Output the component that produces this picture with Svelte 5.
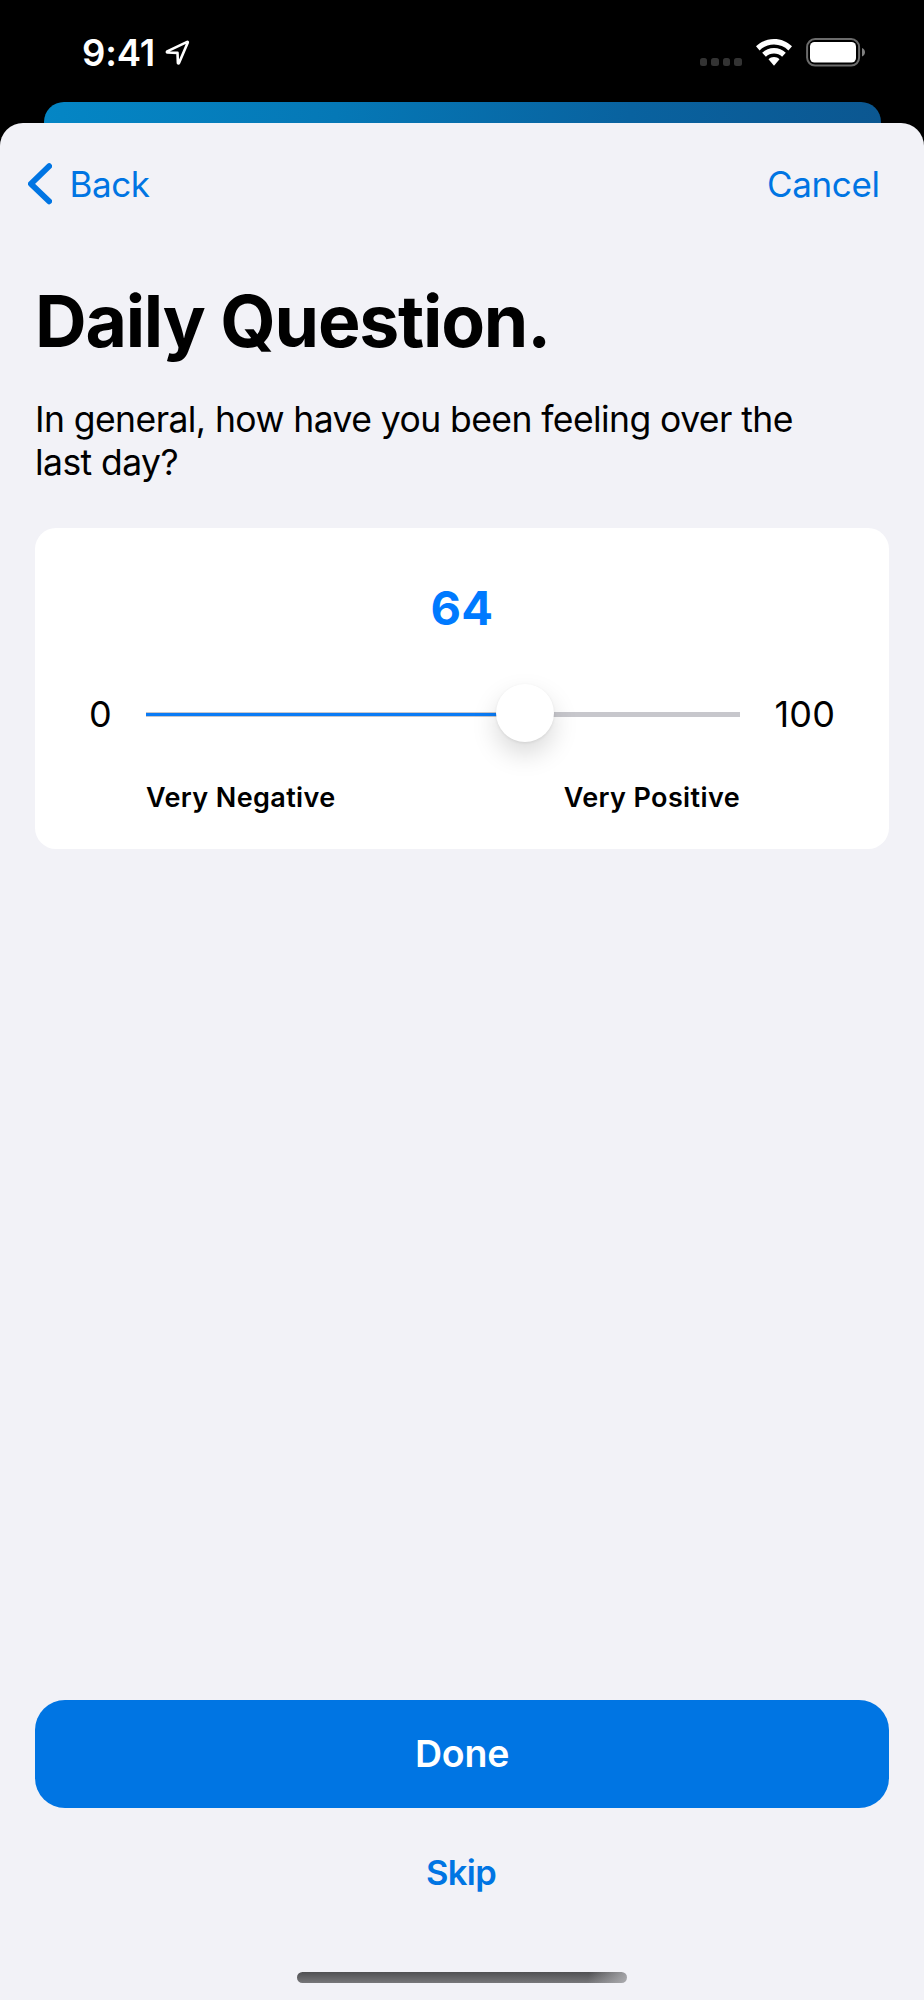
<script>
  let value = 64;
  const min = 0;
  const max = 100;

  const trackWidth = 594;
  const thumbSize = 58;

  $: thumbLeft = ((value - min) / (max - min)) * (trackWidth - thumbSize) + 7;
</script>

<div class="screen">
  <header class="status-bar">
    <div class="clock">
      <span class="time">9:41</span>
      <svg class="location" viewBox="0 0 26 26">
        <path d="M22.8 2.4Q23 1.6 22.2 1.9L2.2 11.4Q1.4 12.2 2.4 12.5L12.5 12.9L12.9 23Q13.5 24 14 23Z" />
      </svg>
    </div>
    <div class="indicators">
      <div class="signal"><i></i><i></i><i></i><i></i></div>
      <svg class="wifi" viewBox="0 0 36 27">
        <path d="M18 0C11 0 4.8 2.7 0 7.3L3.6 11.4C7.4 7.6 12.5 5.5 18 5.5S28.6 7.6 32.4 11.4L36 7.3C31.2 2.7 25 0 18 0Z" />
        <path d="M18 9C13.5 9 9.4 10.7 6.2 13.8L9.9 17.7C12.1 15.7 14.9 14.5 18 14.5S23.9 15.7 26.1 17.7L29.8 13.8C26.6 10.7 22.5 9 18 9Z" />
        <path d="M18 18C15.9 18 14 18.7 12.5 20.2L18 26.7L23.5 20.2C22 18.7 20.1 18 18 18Z" />
      </svg>
      <svg class="battery" viewBox="0 0 60 29">
        <rect class="shell" x="1.1" y="1.1" width="52" height="26.5" rx="8" />
        <rect class="charge" x="4" y="4" width="46" height="20.5" rx="4.5" />
        <path class="nub" d="M56 10C60 11.5 60 17 56 18.5Z" />
      </svg>
    </div>
  </header>

  <div class="parent-sheet"></div>

  <main class="sheet">
    <nav>
      <button class="link back">
        <svg class="chevron" viewBox="0 0 24 42">
          <path d="M21.2 3.2L2.9 20.8L21.2 38.3" />
        </svg>
        <span>Back</span>
      </button>
      <button class="link cancel">Cancel</button>
    </nav>

    <h1>Daily Question.</h1>
    <p class="question">In general, how have you been feeling over the<br />last day?</p>

    <section class="card">
      <div class="value">{value}</div>
      <div class="scale">
        <span class="min">{min}</span>
        <div class="track">
          <div class="fill" style="width: {thumbLeft + thumbSize / 2}px"></div>
          <div class="thumb" style="left: {thumbLeft}px"></div>
        </div>
        <span class="max">{max}</span>
      </div>
      <div class="labels">
        <span>Very Negative</span>
        <span>Very Positive</span>
      </div>
    </section>

    <footer>
      <button class="done">Done</button>
      <button class="link skip">Skip</button>
      <div class="home-indicator"></div>
    </footer>
  </main>
</div>

<style>
  :global(body) {
    background: #000;
  }

  .screen {
    display: flex;
    flex-direction: column;
    width: 924px;
    height: 2000px;
    overflow: hidden;
    background: #000;
    color: #000;
    font-family: Inter, 'Liberation Sans', sans-serif;
  }

  button {
    padding: 0;
    border: 0;
    background: none;
    font-family: inherit;
    cursor: pointer;
  }

  svg {
    display: block;
    flex: none;
  }

  .status-bar {
    display: flex;
    justify-content: space-between;
    box-sizing: border-box;
    height: 102px;
    padding: 38px 58px 0 82px;
    color: #fff;
  }

  .clock {
    display: flex;
    height: 30px;
    align-items: center;
  }

  .time {
    width: 83px;
    font-size: 36.5px;
    font-weight: 600;
    line-height: 30px;
    letter-spacing: -0.1px;
  }

  .location {
    width: 26px;
    height: 26px;
  }

  .location path {
    fill: none;
    stroke: #fff;
    stroke-width: 2.6;
    stroke-linejoin: round;
  }

  .indicators {
    display: flex;
    align-items: flex-start;
  }

  .signal {
    display: flex;
    gap: 4px;
    margin: 20px 14px 0 0;
  }

  .signal i {
    width: 7.6px;
    height: 8px;
    border-radius: 2.5px;
    background: #333;
  }

  .wifi {
    width: 36px;
    height: 27px;
    margin: 1px 14px 0 0;
    fill: #fff;
  }

  .battery {
    width: 60px;
    height: 29px;
  }

  .shell {
    fill: none;
    stroke: #6b6b6b;
    stroke-width: 2;
  }

  .charge {
    fill: #fff;
  }

  .nub {
    fill: #808080;
  }

  .parent-sheet {
    height: 21px;
    margin: 0 43.5px;
    border-radius: 20px 20px 0 0;
    background: linear-gradient(100deg, #0486c5, #0578b6 35%, #09629f 70%, #0b5791);
  }

  .sheet {
    display: flex;
    flex: 1;
    flex-direction: column;
    padding: 0 35px;
    border-radius: 23px 23px 0 0;
    background: #f2f2f7;
  }

  nav {
    display: flex;
    justify-content: space-between;
    align-items: center;
    height: 121px;
    margin: 0 9.5px 0 -7.5px;
  }

  .link {
    color: #0075e3;
    font-size: 35px;
    line-height: 44px;
  }

  .back {
    display: flex;
    align-items: center;
    gap: 18px;
    letter-spacing: -0.4px;
  }

  .chevron {
    width: 24px;
    height: 42px;
  }

  .chevron path {
    fill: none;
    stroke: #0075e3;
    stroke-width: 5.8;
    stroke-linecap: round;
    stroke-linejoin: round;
  }

  .cancel {
    letter-spacing: -0.4px;
  }

  h1 {
    margin: 32px 0;
    font-size: 71.5px;
    font-weight: 700;
    line-height: 90px;
    letter-spacing: -1.22px;
    white-space: nowrap;
  }

  .question {
    margin: 0;
    font-size: 35.5px;
    line-height: 43.4px;
    letter-spacing: -0.57px;
    white-space: nowrap;
  }

  .card {
    box-sizing: border-box;
    height: 321px;
    margin-top: 43px;
    padding: 50px 55px 0;
    border-radius: 21px;
    background: #fff;
  }

  .value {
    color: #007aff;
    font-size: 47px;
    font-weight: 700;
    line-height: 60px;
    letter-spacing: 0.3px;
    text-align: center;
  }

  .scale {
    display: flex;
    align-items: center;
    height: 61px;
    margin-top: 46px;
    font-size: 36px;
  }

  .min {
    flex: none;
    width: 56.5px;
    margin-left: -1px;
  }

  .max {
    padding-left: 35px;
    letter-spacing: 0.2px;
  }

  .track {
    position: relative;
    display: flex;
    flex: none;
    align-items: center;
    width: 594px;
    height: 5px;
    background: #c7c7cc;
  }

  .fill {
    height: 3px;
    background: #0a7bf5;
  }

  .thumb {
    position: absolute;
    top: -28px;
    width: 58px;
    height: 58px;
    border-radius: 50%;
    background: #fff;
    box-shadow: 0 12px 26px rgba(0, 0, 0, 0.15), 0 1px 3px rgba(0, 0, 0, 0.08);
  }

  .labels {
    display: flex;
    justify-content: space-between;
    width: 594px;
    margin: 33px 0 0 56px;
    font-size: 27px;
    font-weight: 600;
    line-height: 40px;
    letter-spacing: 0.38px;
  }

  footer {
    display: flex;
    flex-direction: column;
    align-items: center;
    margin-top: auto;
    padding-bottom: 17px;
  }

  .done {
    width: 100%;
    height: 108px;
    padding-bottom: 2px;
    border-radius: 30px;
    background: #0075e3;
    color: #fff;
    font-size: 37.5px;
    font-weight: 600;
    letter-spacing: -0.2px;
  }

  .skip {
    margin: 43px 0 77px;
    padding-right: 2px;
    font-size: 34.5px;
    font-weight: 600;
    letter-spacing: -0.6px;
  }

  .home-indicator {
    width: 330px;
    height: 11px;
    border-radius: 6px;
    background:
      linear-gradient(100deg, transparent 88%, rgba(190, 190, 194, 0.75)),
      linear-gradient(#505052, #77777a);
  }
</style>
